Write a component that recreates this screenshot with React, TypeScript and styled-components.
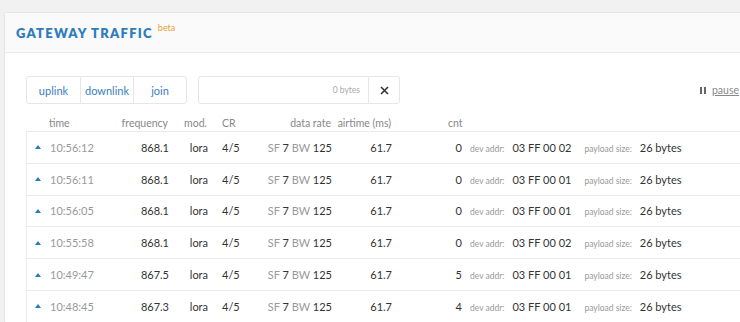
import styled, { createGlobalStyle } from "styled-components";

const GlobalStyle = createGlobalStyle`
  body {
    margin: 0;
    background: #f1f1f1;
    font-family: Lato, "Open Sans", sans-serif;
    overflow: hidden;
  }
`;

const Page = styled.div`
  padding: 12px 0 0 4px;
  width: 820px;
`;

const Card = styled.div`
  background: white;
  border: 1px solid #e6e6e6;
  border-radius: 3px;
`;

const CardHeader = styled.div`
  display: flex;
  align-items: center;
  height: 39px;
  padding-left: 11px;
  background: #fafafa;
  border-bottom: 1px solid #ececec;
`;

const Title = styled.h1`
  margin: 0;
  font-size: 13px;
  font-weight: 800;
  letter-spacing: 1.25px;
  color: #2d7cc0;
`;

const Beta = styled.sup`
  align-self: flex-start;
  margin: 9px 0 0 5px;
  font-size: 9px;
  color: #e9a23b;
`;

const CardBody = styled.div`
  padding: 23px 0 0 21px;
`;

const Toolbar = styled.div`
  display: flex;
  align-items: center;
  gap: 11px;
  height: 28px;
`;

const Tabs = styled.div`
  display: flex;
  height: 100%;
  border: 1px solid #e6e6e6;
  border-radius: 3px;
  box-sizing: border-box;
`;

const Tab = styled.button<{ first?: boolean }>`
  width: 53px;
  padding: 0;
  border: none;
  border-left: ${(p) => (p.first ? "none" : "1px solid #e6e6e6")};
  background: transparent;
  font-family: inherit;
  font-size: 11px;
  color: #3a7ec0;
`;

const Search = styled.div`
  display: flex;
  width: 202px;
  height: 100%;
  border: 1px solid #e6e6e6;
  border-radius: 3px;
  box-sizing: border-box;
`;

const SearchField = styled.div`
  flex: 1;
  display: flex;
  align-items: center;
  justify-content: flex-end;
  padding-right: 8px;
  font-size: 8.5px;
  color: #aaa;
`;

const Clear = styled.button`
  width: 31px;
  padding: 0;
  border: none;
  border-left: 1px solid #e6e6e6;
  background: transparent;
  display: flex;
  align-items: center;
  justify-content: center;
`;

const Pause = styled.div`
  margin-left: auto;
  margin-right: 84px;
  display: flex;
  align-items: center;
  gap: 6px;
  font-size: 10.5px;
  color: #888;
`;

const PauseIcon = styled.span`
  display: flex;
  gap: 1.5px;
  span {
    width: 2px;
    height: 7px;
    background: #666;
  }
`;

const PauseLink = styled.span`
  text-decoration: underline;
`;

const cols = "23px 71px 48px 39px 40px 84px 60px 70px 1fr";

const HeadRow = styled.div`
  display: grid;
  grid-template-columns: ${cols};
  height: 17px;
  margin-top: 10px;
  align-items: center;
  font-size: 10.5px;
  color: #888;
`;

const Table = styled.div`
  border: 1px solid #ebebeb;
  border-right: none;
`;

const Row = styled.div`
  display: grid;
  grid-template-columns: ${cols};
  height: 30.8px;
  align-items: center;
  font-size: 11px;
  color: #333;
  border-top: 1px solid #ebebeb;
  &:first-child {
    border-top: none;
  }
`;

const Cell = styled.span<{ right?: boolean; pad?: number }>`
  text-align: ${(p) => (p.right ? "right" : "left")};
  padding-left: ${(p) => p.pad ?? 0}px;
  white-space: nowrap;
`;

const Muted = styled.span`
  color: #999;
`;

const Label = styled.span`
  font-size: 8.5px;
  color: #999;
  margin-right: 8px;
`;

const Value = styled.span`
  font-size: 11px;
  color: #333;
  margin-right: 13px;
`;

const Arrow = styled.span`
  display: block;
  margin-left: 8px;
  width: 0;
  height: 0;
  border-left: 3.5px solid transparent;
  border-right: 3.5px solid transparent;
  border-bottom: 4px solid #2a7ab8;
`;

const packets = [
  { time: "10:56:12", freq: "868.1", cnt: 0, addr: "03 FF 00 02" },
  { time: "10:56:11", freq: "868.1", cnt: 0, addr: "03 FF 00 01" },
  { time: "10:56:05", freq: "868.1", cnt: 0, addr: "03 FF 00 01" },
  { time: "10:55:58", freq: "868.1", cnt: 0, addr: "03 FF 00 02" },
  { time: "10:49:47", freq: "867.5", cnt: 5, addr: "03 FF 00 01" },
  { time: "10:48:45", freq: "867.3", cnt: 4, addr: "03 FF 00 01" },
];

export default function App() {
  return (
    <Page>
      <GlobalStyle />
      <Card>
        <CardHeader>
          <Title>GATEWAY TRAFFIC</Title>
          <Beta>beta</Beta>
        </CardHeader>
        <CardBody>
          <Toolbar>
            <Tabs>
              <Tab first>uplink</Tab>
              <Tab>downlink</Tab>
              <Tab>join</Tab>
            </Tabs>
            <Search>
              <SearchField>0 bytes</SearchField>
              <Clear>
                <svg width="9" height="9" viewBox="0 0 9 9">
                  <path d="M1 1L8 8M8 1L1 8" stroke="#333" strokeWidth="1.6" />
                </svg>
              </Clear>
            </Search>
            <Pause>
              <PauseIcon>
                <span />
                <span />
              </PauseIcon>
              <PauseLink>pause</PauseLink>
            </Pause>
          </Toolbar>

          <HeadRow>
            <span />
            <Cell>time</Cell>
            <Cell right>frequency</Cell>
            <Cell right>mod.</Cell>
            <Cell pad={15}>CR</Cell>
            <Cell right>data rate</Cell>
            <Cell right>airtime (ms)</Cell>
            <Cell pad={57}>cnt</Cell>
            <span />
          </HeadRow>

          <Table>
            {packets.map((p) => (
              <Row key={p.time}>
                <Arrow />
                <Cell>
                  <Muted>{p.time}</Muted>
                </Cell>
                <Cell right>{p.freq}</Cell>
                <Cell right>lora</Cell>
                <Cell pad={14}>4/5</Cell>
                <Cell right>
                  <Muted>SF</Muted> 7 <Muted>BW</Muted> 125
                </Cell>
                <Cell right>61.7</Cell>
                <Cell right>{p.cnt}</Cell>
                <Cell pad={8}>
                  <Label>dev addr:</Label>
                  <Value>{p.addr}</Value>
                  <Label>payload size:</Label>
                  <Value>26 bytes</Value>
                </Cell>
              </Row>
            ))}
          </Table>
        </CardBody>
      </Card>
    </Page>
  );
}
